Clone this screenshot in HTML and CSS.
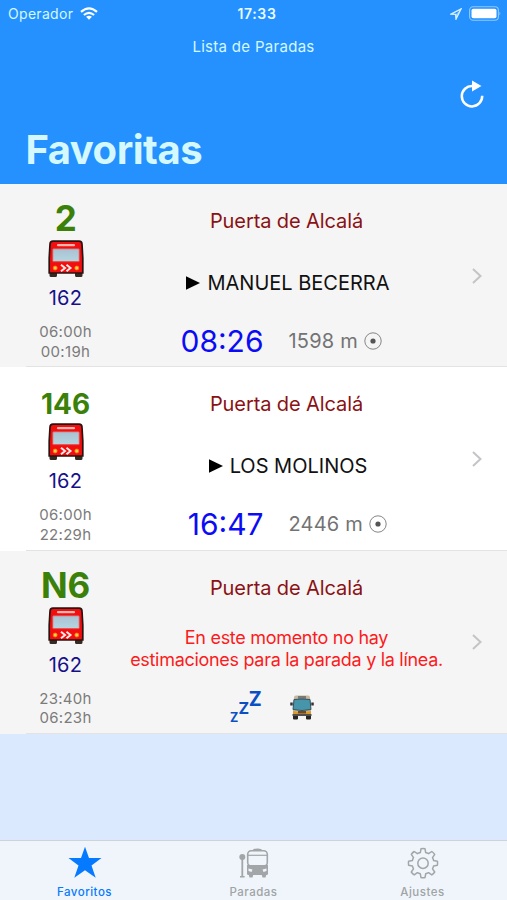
FILE: index.html
```
<!DOCTYPE html>
<html lang="es">
<head>
    <meta charset="UTF-8">
    <title>Favoritas</title>
    <link rel="stylesheet" href="styles.css">
</head>
<body>
<svg class="defs" width="0" height="0">
    <defs>
        <linearGradient id="glass" x1="0" y1="0" x2="0" y2="1">
            <stop offset="0" stop-color="#a9c1d2"/>
            <stop offset="1" stop-color="#b5d5e0"/>
        </linearGradient>
    </defs>
    <symbol id="bus" viewBox="0 0 36 38">
        <path d="M1.500 31h7.500v4.500q0 1.500-1.500 1.500h-4.500q-1.500 0-1.500-1.500zM27 31h7.500v4.500q0 1.500-1.500 1.500h-4.500q-1.500 0-1.500-1.500z" fill="#352b20"/>
        <path d="M5 1.200h26q3 0 3 3l.8 14v14.800h-33.600v-14.800l.8-14q0-3 3-3z" fill="#f20d0f" stroke="#291412" stroke-width="1.700"/>
        <path d="M10 5.200h16" stroke="#ffb5ae" stroke-width="2.200" stroke-linecap="round"/>
        <rect x="4.700" y="8.700" width="26.600" height="13" rx="1" fill="url(#glass)" stroke="#e74745"/>
        <path d="M13 24.800l4 3.200-4 3.200M18.500 24.800l4 3.200-4 3.200" fill="none" stroke="#ffe9e6" stroke-width="2"/>
        <circle cx="7.200" cy="28" r="2" fill="#ffd43a" stroke="#ff7517" stroke-width=".8"/>
        <circle cx="28.800" cy="28" r="2" fill="#ffd43a" stroke="#ff7517" stroke-width=".8"/>
    </symbol>
    <symbol id="chevron" viewBox="0 0 10 16">
        <path d="M1 1l7.500 7-7.500 7" fill="none" stroke="#c4c4c6" stroke-width="2"/>
    </symbol>
    <symbol id="target" viewBox="0 0 18 18">
        <circle cx="9" cy="9" r="8.200" fill="none" stroke="#858585" stroke-width="1"/>
        <circle cx="9" cy="9" r="2.600" fill="#555"/>
    </symbol>
    <symbol id="play" viewBox="0 0 14 14">
        <path d="M0 .2l14 6.800-14 6.800z" fill="#000"/>
    </symbol>
</svg>

<header class="header">
    <div class="status">
        <div class="status-left">
            <span class="carrier">Operador</span>
            <svg width="18" height="13" viewBox="0 0 18 13">
                <g fill="none" stroke="#fff" stroke-width="2.200">
                    <path d="M1 4.900q8-7 16 0"/>
                    <path d="M3.900 8q5.100-4.400 10.200 0"/>
                </g>
                <path d="M6.100 9.800q2.900-2.300 5.800 0l-2.900 2.900z" fill="#fff"/>
            </svg>
        </div>
        <span class="clock">17:33</span>
        <div class="status-right">
            <svg width="12" height="12" viewBox="0 0 12 12">
                <path d="M1 6.200l10-5.200-5 10-.3-4.600z" fill="none" stroke="#d7f0ff" stroke-width="1.400"/>
                <path d="M11 1l-5.200 5.400.2 4.600z" fill="#d7f0ff" fill-opacity=".5"/>
            </svg>
            <svg width="32" height="15" viewBox="0 0 32 15">
                <rect x=".6" y=".8" width="28.800" height="13.400" rx="3.500" fill="none" stroke="#8fcaff" stroke-width="1.100"/>
                <rect x="2.500" y="2.700" width="25" height="9.600" rx="1.800" fill="#fff"/>
                <path d="M30.500 5.500q1.600 2 0 4z" fill="#8fcaff"/>
            </svg>
        </div>
    </div>
    <div class="subtitle">Lista de Paradas</div>
    <div class="toolbar">
        <svg width="24" height="28" viewBox="0 0 24 28">
            <path d="M12.500 6a10.200 10.200 0 1 0 9.700 9.800" fill="none" stroke="#fff" stroke-width="2.500"/>
            <path d="M12 .5l9.500 5.400-9.500 5.600z" fill="#fff"/>
        </svg>
    </div>
    <h1 class="title">Favoritas</h1>
</header>

<div class="list">
    <div class="row">
        <div class="line">
            <div class="line-number">2</div>
            <svg class="bus"><use href="#bus"/></svg>
            <div class="stop-id">162</div>
            <div class="hours">06:00h<br>00:19h</div>
        </div>
        <div class="info">
            <div class="stop-name">Puerta de Alcalá</div>
            <div class="destination"><svg class="play"><use href="#play"/></svg><span>MANUEL BECERRA</span></div>
            <div class="estimate">
                <span class="time">08:26</span>
                <span class="distance">1598 m</span>
                <svg class="target"><use href="#target"/></svg>
            </div>
        </div>
        <svg class="chevron"><use href="#chevron"/></svg>
    </div>
    <div class="row white">
        <div class="line">
            <div class="line-number"><span class="long">146</span></div>
            <svg class="bus"><use href="#bus"/></svg>
            <div class="stop-id">162</div>
            <div class="hours">06:00h<br>22:29h</div>
        </div>
        <div class="info">
            <div class="stop-name">Puerta de Alcalá</div>
            <div class="destination"><svg class="play"><use href="#play"/></svg><span>LOS MOLINOS</span></div>
            <div class="estimate">
                <span class="time">16:47</span>
                <span class="distance">2446 m</span>
                <svg class="target"><use href="#target"/></svg>
            </div>
        </div>
        <svg class="chevron"><use href="#chevron"/></svg>
    </div>
    <div class="row">
        <div class="line">
            <div class="line-number">N6</div>
            <svg class="bus"><use href="#bus"/></svg>
            <div class="stop-id">162</div>
            <div class="hours">23:40h<br>06:23h</div>
        </div>
        <div class="info">
            <div class="stop-name">Puerta de Alcalá</div>
            <div class="destination error">En este momento no hay<br>estimaciones para la parada y la línea.</div>
            <div class="estimate asleep">
                <svg class="zzz" width="32" height="32" viewBox="0 0 32 32">
                    <text x="0" y="30.500" font-size="12.500">Z</text>
                    <text x="8.400" y="23" font-size="16">Z</text>
                    <text x="18.800" y="14.500" font-size="19.500">Z</text>
                </svg>
                <svg width="24" height="26" viewBox="0 0 24 26">
                    <path d="M3 20h5v4.500q0 1-1 1h-3q-1 0-1-1zM16 20h5v4.500q0 1-1 1h-3q-1 0-1-1z" fill="#252525"/>
                    <path d="M4 3.500q0-2 2-2h12q2 0 2 2l1 13.500v5h-18v-5z" fill="#c6b99f"/>
                    <rect x="8" y="2" width="8" height="2.800" fill="#777b76"/>
                    <path d="M4 5.500q8-1 16 0l1 10q-9 2-18 0z" fill="#4695aa" stroke="#34525d" stroke-width="1"/>
                    <path d="M1.500 8.500v3M22.500 8.500v3" stroke="#303236" stroke-width="2.500"/>
                    <path d="M3 17l4 .8h10l4-.8v3h-18z" fill="#dd9a2c"/>
                    <rect x="8" y="17" width="8" height="2.500" fill="#6f482c"/>
                    <path d="M2.500 21h19" stroke="#50504c" stroke-width="2"/>
                </svg>
            </div>
        </div>
        <svg class="chevron"><use href="#chevron"/></svg>
    </div>
</div>

<nav class="tabs">
    <a class="tab active">
        <svg width="34" height="34" viewBox="0 0 34 34">
            <path d="M17 .8l4 11.200h12.500l-10 7.500 4.200 12.200-10.700-7.500-10.700 7.500 4.200-12.200-10-7.500h12.500z" fill="#067aff"/>
        </svg>
        <span>Favoritos</span>
    </a>
    <a class="tab">
        <svg width="30" height="34" viewBox="0 0 30 34">
            <g fill="#a2a6a8">
                <circle cx="3.300" cy="11" r="3"/>
                <path d="M2.400 12h1.800v18h1.400v1.400h-4.600v-1.400h1.400z"/>
                <path d="M13.500 5q0-2.500 5-2.500t5 2.500z"/>
                <path d="M8 19h21v8.500q0 1.500-1.500 1.500h-18q-1.500 0-1.500-1.500z"/>
                <path d="M9.500 28h5l-1 3.500h-3zM22.500 28h5l-1 3.500h-3z"/>
            </g>
            <rect x="8.700" y="4.800" width="19.600" height="15.200" rx="3.500" fill="none" stroke="#a2a6a8" stroke-width="1.600"/>
            <path d="M9 9.300h19" stroke="#a2a6a8" stroke-width="1.200"/>
            <path d="M9.500 22.500l4 1-1 2.500-3-1zM27.500 22.500l-4 1 1 2.500 3-1z" fill="#eff5fa"/>
        </svg>
        <span>Paradas</span>
    </a>
    <a class="tab">
        <svg width="32" height="34" viewBox="0 0 32 34">
            <g fill="none" stroke="#a2a6a8" stroke-width="1.500" stroke-linejoin="round">
                <path d="M14 2.800q2-.4 4 0l.7 3.800q1.500.3 2.900 1.100l3.200-2.200q1.800 1.200 2.900 2.900l-2.200 3.200q.8 1.400 1.100 2.900l3.800.7q.4 2 0 4l-3.800.7q-.3 1.500-1.100 2.900l2.200 3.200q-1.200 1.800-2.900 2.900l-3.200-2.200q-1.400.8-2.900 1.100l-.7 3.800q-2 .4-4 0l-.7-3.800q-1.500-.3-2.900-1.100l-3.200 2.200q-1.800-1.200-2.900-2.900l2.200-3.200q-.8-1.400-1.100-2.900l-3.800-.7q-.4-2 0-4l3.800-.7q.3-1.500 1.100-2.900l-2.200-3.200q1.200-1.800 2.900-2.900l3.200 2.200q1.400-.8 2.900-1.100z"/>
                <circle cx="16" cy="17.200" r="5.200"/>
            </g>
        </svg>
        <span>Ajustes</span>
    </a>
</nav>
</body>
</html>
```
FILE: styles.css
```
* {
    box-sizing: border-box;
}
body {
    margin: 0;
    height: 900px;
    display: flex;
    flex-direction: column;
    font-family: Inter, "Liberation Sans", sans-serif;
    background-color: #dbe9ff;
    overflow: hidden;
}
svg {
    display: block;
    flex: none;
}
.defs {
    position: absolute;
}
.header {
    height: 184px;
    background-color: #2491ff;
    color: #d5f8ff;
}
.status {
    display: grid;
    grid-template-columns: 1fr auto 1fr;
    align-items: center;
    height: 27px;
    padding: 0 6px 0 8px;
    font-size: 14px;
}
.status-left, .status-right {
    display: flex;
    align-items: center;
    gap: 7px;
}
.status-right {
    justify-content: flex-end;
}
.carrier {
    letter-spacing: 0.3px;
}
.clock {
    padding-left: 5px;
    font-weight: 600;
    letter-spacing: 0.6px;
    color: #e8fbff;
}
.subtitle {
    height: 39px;
    line-height: 40px;
    font-size: 15px;
    letter-spacing: 0.3px;
    text-align: center;
}
.toolbar {
    display: flex;
    justify-content: flex-end;
    height: 64px;
    padding: 14px 23px 0 0;
}
.title {
    margin: 0;
    padding-left: 25.5px;
    height: 40px;
    line-height: 40px;
    font-size: 40px;
    font-weight: 700;
    letter-spacing: -0.5px;
}
.row {
    display: flex;
    align-items: center;
    height: 183.3px;
    background: linear-gradient(#e3e3e3, #e3e3e3) 26px bottom / 100% 1px no-repeat #f5f5f5;
}
.white {
    background-color: #fff;
}
.line {
    display: flex;
    flex-direction: column;
    align-items: center;
    align-self: flex-start;
    width: 79px;
    margin-left: 26px;
    padding-top: 10px;
}
.line-number {
    height: 46px;
    line-height: 48px;
    font-size: 35px;
    font-weight: 700;
    letter-spacing: -0.3px;
    color: #3b8009;
}
.long {
    font-size: 28px;
    letter-spacing: 0;
}
.bus {
    width: 36px;
    height: 38px;
}
.stop-id {
    height: 38px;
    line-height: 40px;
    font-size: 20px;
    letter-spacing: 0.3px;
    color: #15108a;
}
.hours {
    padding-top: 6px;
    line-height: 19.5px;
    font-size: 15px;
    letter-spacing: 0.3px;
    text-align: center;
    color: #7b7b7b;
}
.info {
    align-self: stretch;
    width: 363px;
    text-align: center;
}
.stop-name {
    height: 67.5px;
    padding-top: 7px;
    line-height: 60px;
    font-size: 20px;
    letter-spacing: -0.1px;
    color: #8a1114;
}
.destination {
    display: flex;
    align-items: center;
    justify-content: center;
    gap: 7px;
    height: 62px;
    padding-left: 3px;
    font-size: 20px;
    color: #111;
}
.play {
    width: 14px;
    height: 14px;
}
.error {
    display: block;
    padding: 9px 0 0;
    line-height: 22px;
    font-size: 18px;
    letter-spacing: -0.3px;
    color: #fb1b20;
}
.estimate {
    display: flex;
    align-items: center;
    height: 54px;
}
.time {
    width: 158.5px;
    margin-right: 25px;
    text-align: right;
    font-size: 30px;
    color: #0b0bf5;
}
.distance {
    margin-right: 6px;
    font-size: 20px;
    letter-spacing: 0.2px;
    color: #737373;
}
.target {
    width: 18px;
    height: 18px;
}
.asleep {
    gap: 28px;
    padding-left: 125px;
}
.zzz {
    overflow: visible;
    font-weight: 700;
    fill: #0b4fc4;
}
.chevron {
    width: 10px;
    height: 16px;
    margin-left: 4px;
}
.tabs {
    display: flex;
    height: 60px;
    margin-top: auto;
    border-top: 1px solid #ccd3da;
    background-color: #eff5fa;
}
.tab {
    display: flex;
    flex: 1;
    flex-direction: column;
    align-items: center;
    padding-top: 5px;
    font-size: 11.5px;
    font-weight: 500;
    line-height: 24px;
    letter-spacing: 0.5px;
    color: #a0a4a6;
}
.active {
    color: #067aff;
}
```
